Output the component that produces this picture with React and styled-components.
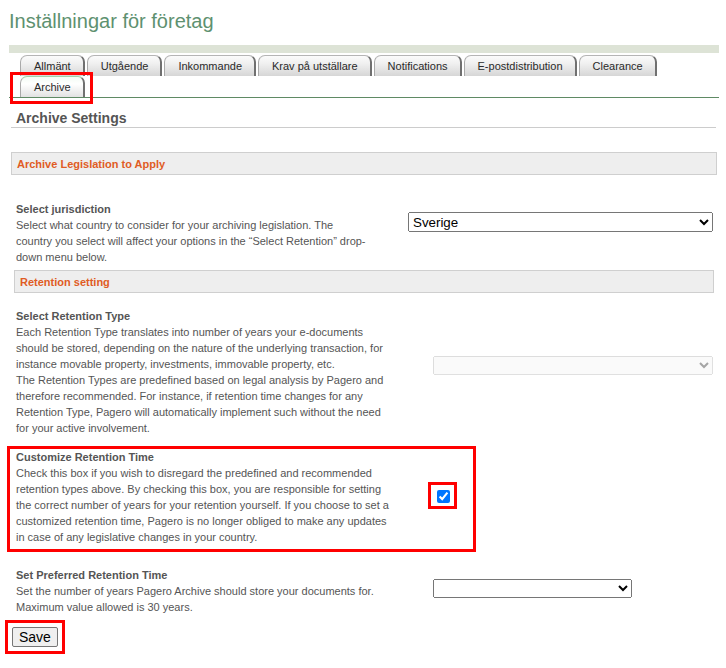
import React from 'react'
import styled, { createGlobalStyle } from 'styled-components'

const GlobalStyle = createGlobalStyle`
  body {
    margin: 0;
    background: #fff;
    font-family: Arial, "Liberation Sans", sans-serif;
  }
`

const Page = styled.div`
  box-sizing: border-box;
  width: 726px;
  padding: 0 7px 0 5px;
`

const Title = styled.h1`
  margin: 10px 0 0 4px;
  font-size: 20px;
  line-height: 23px;
  font-weight: normal;
  color: #5e9170;
`

const Bar = styled.div`
  margin: 12px 0 0 4px;
  height: 8px;
  background: #dde3d6;
`

/////  Tabs  /////

const TabList = styled.ul`
  display: flex;
  flex-wrap: wrap;
  column-gap: 2px;
  list-style: none;
  margin: 2px 0 0 4px;
  padding: 0 0 0 11px;
  border-bottom: 1px solid #5f8a64;
`

const Tab = styled.li`
  position: relative;
  box-sizing: border-box;
  height: 21px;
  padding: 0 12px 0 13px;
  font-size: 11px;
  line-height: 20px;
  color: #2a2a2a;
  white-space: nowrap;
  border: 1px solid #a9a9a9;
  border-top-color: ${p => (p.$active ? '#9ed3a6' : '#b5b5b5')};
  border-right: 2px solid #707070;
  border-bottom: none;
  border-radius: 7px 7px 0 0;
  background: ${p =>
    p.$active
      ? 'linear-gradient(#f3fbf4, #ffffff 35%, #e2e2e2)'
      : 'linear-gradient(#fbfbfb, #efefef 40%, #d6d6d6)'};

  // red annotation frame round the chosen tab
  ${p =>
    p.$marked &&
    `
    &::after {
      content: '';
      position: absolute;
      left: -11px;
      top: -5px;
      width: 83px;
      height: 32px;
      box-sizing: border-box;
      border: 3px solid #f00;
    }
  `}
`

/////  Content  /////

const SectionTitle = styled.h2`
  margin: 12px 3px 0 6px;
  padding: 0 0 0 5px;
  font-size: 14px;
  line-height: 17px;
  font-weight: bold;
  color: #555;
  border-bottom: 1px solid #ccc;
`

const GroupHeader = styled.div`
  margin: ${p => p.$top}px ${p => p.$right}px 0 ${p => p.$left}px;
  height: 23px;
  box-sizing: border-box;
  padding-left: 5px;
  border: 1px solid #cfcfcf;
  background: #eee;
  color: #e05c24;
  font-size: 11px;
  font-weight: bold;
  line-height: 22px;
`

const Row = styled.div`
  display: grid;
  grid-template-columns: ${p => p.$textWidth}px auto;
  column-gap: ${p => p.$gap}px;
  align-items: start;
  margin: ${p => p.$top}px 0 0 11px;
`

const Label = styled.div`
  font-weight: bold;
`

const Text = styled.div`
  font-size: 11px;
  line-height: 16px;
  color: #555;
`

const Select = styled.select`
  box-sizing: border-box;
  width: ${p => p.$width}px;
  height: ${p => p.$height || 19}px;
  margin: ${p => p.$offset}px 0 0;
  font-family: Arial, "Liberation Sans", sans-serif;
  font-size: 13.33px;
`

const Highlight = styled.div`
  box-sizing: border-box;
  border: 3px solid #f00;
`

const CustomBox = styled(Highlight)`
  display: grid;
  grid-template-columns: 376px auto;
  column-gap: 36px;
  align-items: start;
  width: 469px;
  margin: 10px 0 0 2px;
  padding: 0 16px 4px 6px;
`

const CheckFrame = styled(Highlight)`
  display: flex;
  margin-top: 33px;
  padding: 2px 1px 0 2px;

  > input {
    margin: 3px 3px 3px 4px;
    width: 13px;
    height: 13px;
  }
`

const SaveFrame = styled(Highlight)`
  display: inline-block;
  margin-top: 5px;
  padding: 4px;
`

const SaveButton = styled.button`
  display: block;
  box-sizing: border-box;
  height: 20px;
  padding: 1px 6px;
  font-family: Arial, "Liberation Sans", sans-serif;
  font-size: 14px;
  line-height: 16px;
  color: #000;
  background: #efefef;
  border: 1px solid #767676;
  border-radius: 2px;
`

const tabs = [
  'Allmänt',
  'Utgående',
  'Inkommande',
  'Krav på utställare',
  'Notifications',
  'E-postdistribution',
  'Clearance',
]

export default function App() {
  return (
    <Page>
      <GlobalStyle />
      <Title>Inställningar för företag</Title>
      <Bar />

      <TabList>
        {tabs.map(t => (
          <Tab key={t}>{t}</Tab>
        ))}
        <Tab $active $marked>
          Archive
        </Tab>
      </TabList>

      <SectionTitle>Archive Settings</SectionTitle>

      <GroupHeader $top={24} $right={2} $left={6}>
        Archive Legislation to Apply
      </GroupHeader>

      <Row $top={26} $textWidth={351} $gap={41}>
        <Text>
          <Label>Select jurisdiction</Label>
          Select what country to consider for your archiving legislation. The country you
          select will affect your options in the “Select Retention” drop-down menu below.
        </Text>
        <Select $width={305} $height={20} $offset={11} defaultValue="se">
          <option value="se">Sverige</option>
        </Select>
      </Row>

      <GroupHeader $top={5} $right={5} $left={9}>
        Retention setting
      </GroupHeader>

      <Row $top={15} $textWidth={376} $gap={41}>
        <Text>
          <Label>Select Retention Type</Label>
          Each Retention Type translates into number of years your e-documents should be
          stored, depending on the nature of the underlying transaction, for instance
          movable property, investments, immovable property, etc.
          <br />
          The Retention Types are predefined based on legal analysis by Pagero and therefore
          recommended. For instance, if retention time changes for any Retention Type, Pagero
          will automatically implement such without the need for your active involvement.
        </Text>
        <Select $width={280} $offset={48} disabled>
          <option></option>
        </Select>
      </Row>

      <CustomBox>
        <Text>
          <Label>Customize Retention Time</Label>
          Check this box if you wish to disregard the predefined and recommended retention
          types above. By checking this box, you are responsible for setting the correct
          number of years for your retention yourself. If you choose to set a customized
          retention time, Pagero is no longer obliged to make any updates in case of any
          legislative changes in your country.
        </Text>
        <CheckFrame>
          <input type="checkbox" defaultChecked />
        </CheckFrame>
      </CustomBox>

      <Row $top={15} $textWidth={376} $gap={41}>
        <Text>
          <Label>Set Preferred Retention Time</Label>
          Set the number of years Pagero Archive should store your documents for.
          <br />
          Maximum value allowed is 30 years.
        </Text>
        <Select $width={199} $offset={12}>
          <option></option>
        </Select>
      </Row>

      <SaveFrame>
        <SaveButton>Save</SaveButton>
      </SaveFrame>
    </Page>
  )
}
